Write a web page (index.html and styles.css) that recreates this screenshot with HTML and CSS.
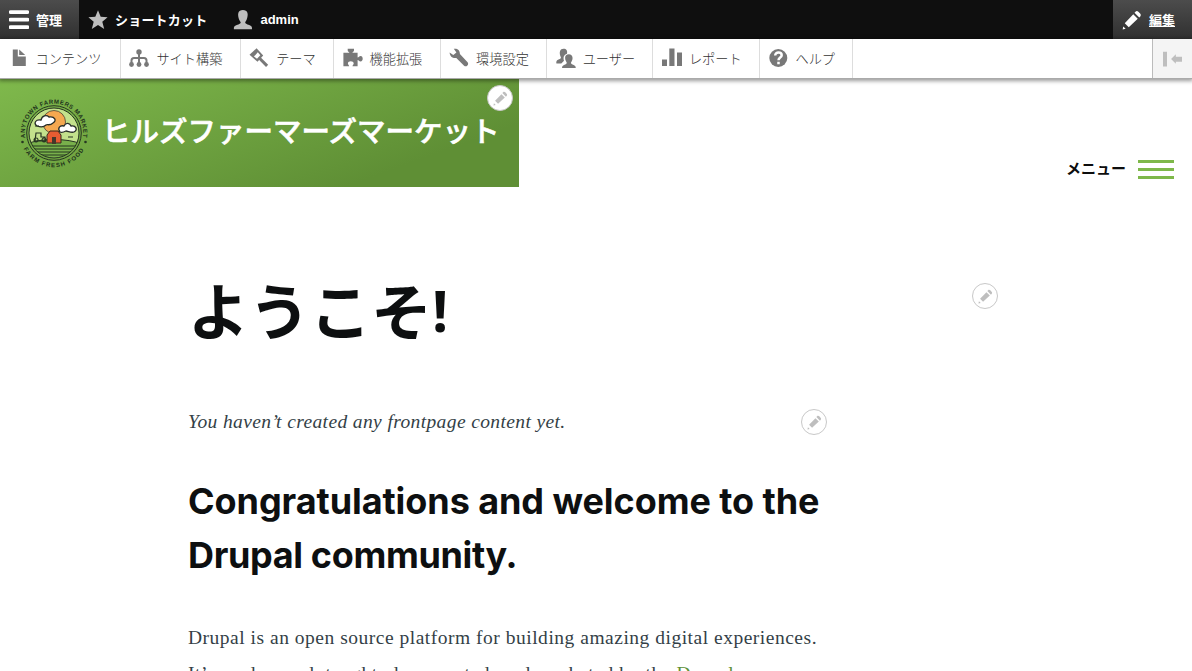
FILE: index.html
```html
<!DOCTYPE html>
<html lang="ja">
<head>
<meta charset="utf-8">
<title>ようこそ! | ヒルズファーマーズマーケット</title>
<link rel="stylesheet" href="styles.css">
</head>
<body>
<svg class="defs" width="0" height="0">
  <symbol id="pencil" viewBox="0 0 16 16"><path d="M14.5 2.800 13.100 1.400c-.7-.7-1.700-.7-2.300-.1l-.8.900L13.800 6l.8-.9c.6-.6.6-1.600-.1-2.300zM2.200 10.500l3.200 3.200 7.200-6.700-3.600-3.600zM.5 15.500l.5-2.400 1.900 1.900z"/></symbol>
</svg>
<nav class="bar">
  <a class="tab tab-active"><svg class="icon-lg" viewBox="0 0 20 20"><path d="M1.500.3h17a1.700 1.700 0 0 1 0 3.600h-17a1.700 1.700 0 0 1 0-3.600zM1.500 7.800h17a1.700 1.700 0 0 1 0 3.800h-17a1.700 1.700 0 0 1 0-3.800zM1.500 15.300h17a1.700 1.700 0 0 1 0 3.800h-17a1.700 1.700 0 0 1 0-3.800z"/></svg>管理</a>
  <a class="tab tab-shortcut"><svg class="icon-lg" viewBox="0 0 20 20"><path d="M10 .2 12.700 6.800 19.600 7.200 14.300 11.700 16.200 19 10 15 3.800 19 5.700 11.700.4 7.200 7.300 6.800z"/></svg>ショートカット</a>
  <a class="tab tab-user"><svg class="icon-lg" viewBox="0 0 20 20"><path d="M.9 19.200c-.3-2.300.5-3.500 2.800-4.300 2.600-.9 4-1.300 4-2.500 0-.8-.8-1.200-1.400-2.500-1.100-2.500-1.500-5.400-.9-7.200C6 1 7.600 0 9.900 0s4 1 4.500 2.800c.6 1.800.2 4.600-.9 7.100-.6 1.300-1.300 1.700-1.300 2.500 0 1.200 1.500 1.600 4 2.500 2.300.8 3.100 2 2.800 4.300z"/></svg>admin</a>
  <a class="tab tab-edit"><svg class="icon-lg"><use href="#pencil"/></svg><span>編集</span></a>
</nav>
<nav class="tray">
  <a class="item item-first"><svg viewBox="0 0 20 20"><path d="M3.800 1.500h5v7h8v9.500h-13zM10.200 1.500l6 5.500h-6z"/></svg>コンテンツ</a>
  <a class="item"><svg viewBox="0 0 20 20"><circle cx="10" cy="4" r="2.700"/><circle cx="2.500" cy="16.500" r="2.400"/><circle cx="10" cy="16.500" r="2.400"/><circle cx="17.500" cy="16.500" r="2.400"/><path class="line" d="M10 5v12M2.500 16.500v-4q0-2.500 2.500-2.500h10q2.500 0 2.500 2.500v4"/></svg>サイト構築</a>
  <a class="item"><svg viewBox="0 0 20 20"><path d="M.5 6.800 7.600.3l6.600 7.200-5.700 6.300z"/><path class="white" d="M8.800 4.300 11.300 7.200 8 10.800 4.800 8.300 6 7.500z"/><path class="handle" d="m10.500 10.300 7.600 7.600"/></svg>テーマ</a>
  <a class="item"><svg viewBox="0 0 20 20"><path d="M.4 4.800h6c0-1-1.700-1.300-1.700-2.300V.7H11v1.800c0 1-1.600 1.300-1.600 2.300h5.200v4.800c1.200 0 1.500-1.500 3-1.500 2.800 0 2.800 5.400 0 5.400-1.500 0-1.800-1.500-3-1.500v6.300H9.500c0-1.300 1.200-1.500 1.200-3 0-2.700-5.800-2.700-5.800 0 0 1.500 1.200 1.700 1.200 3H.4z"/></svg>機能拡張</a>
  <a class="item"><svg viewBox="0 0 20 20"><path d="M4.800.8c3.500-.7 6.300 1.500 6.100 5.200l7.700 8.200c1.700 2-1 5.500-3.500 3.600L7.300 10C3.800 10.600.8 8.500.6 4.500L4.300 7l3.100-2.500z"/></svg>環境設定</a>
  <a class="item"><svg viewBox="0 0 20 20"><path d="M.4 15.400c-.3-2.900.8-3.400 3.500-4.400 1.700-.7 1-1.700.5-2.700C3 4 4 .7 7.500.7c3 0 4.200 2 3.500 5-3.600 1.300-3.900 4-3 7l-2.700 2.700z"/><path d="M6 20.200c.1-2.500 1-3 3.700-4 1.600-.6 1.100-1.600.4-2.600-2.200-4.500-.5-7.300 2.700-7.300s5 2.800 2.800 7.300c-.7 1-1.200 2 .4 2.600 2.700 1 3.700 1.500 3.800 4z"/></svg>ユーザー</a>
  <a class="item"><svg viewBox="0 0 20 20"><path d="M0 11.500h5v6.500H0zM7.300.5h5.200V18H7.300zM15 4.500h5V18h-5z"/></svg>レポート</a>
  <a class="item"><svg viewBox="0 0 20 20"><circle cx="10.300" cy="10" r="9"/><path class="ask" d="M7.200 7.500c0-4 6.500-3.600 6.500-.3 0 2.400-3.200 2.200-3.200 5M10.500 13.800v2.400"/></svg>ヘルプ</a>
  <a class="orient"><svg viewBox="0 0 20 20"><path d="M0 2.300h4.200v15.500H0zM8.500 10l5-5v2.500H20v5.300h-6.500V15z"/></svg></a>
</nav>
<header class="header">
  <div class="brand">
    <svg class="logo" viewBox="0 0 70 70">
      <defs><path id="arc-top" d="M8.200 46.500a29.200 29.200 0 1 1 53.600 0"/><path id="arc-bottom" d="M.8 35a34.200 34.200 0 0 0 68.400 0"/><clipPath id="disc"><circle cx="35" cy="35" r="25"/></clipPath></defs>
      <circle class="ring" cx="35" cy="35" r="27.300"/>
      <g clip-path="url(#disc)">
        <path fill="#c3e18c" d="M9 9h52v52H9z"/>
        <circle cx="35" cy="24" r="11.500" fill="#f5a850" stroke="#333" stroke-width=".7"/>
        <path fill="#78b04b" stroke="#273522" d="M8 46c12-6 42-6 54 0v20H8z"/>
        <path class="rows" d="M9 48h52M9 51h52M9 54h52M9 57h52"/>
      </g>
      <circle class="ring" cx="35" cy="35" r="25"/>
      <path class="cloud" d="M18 28c-4-3-1-7 4-6 1-5 6-5 8-3 6-1 8 4 4 6-3 3-6 1-7 2-2 2-6 2-9 1zM41 34c-3-4 0-7 4-6 2-4 6-3 7 0 5-1 7 4 3 6-3 1-6-1-8-1-2 1-4 2-6 1z"/>
      <path fill="#e65c32" stroke="#352b1e" d="M28 45v-8l3-4h8l3 4v8z"/><path fill="#45382a" d="M33 39h4v7h-4z"/>
      <path class="tractor" d="M17 35h5v4h4v4H16zM17 40a2 2 0 1 0 .1 0M25 40a2 2 0 1 0 .1 0M16 28h4M49 39h5"/>
      <circle cx="3.500" cy="44" r="1.300" fill="#263722"/><circle cx="66.500" cy="44" r="1.300" fill="#263722"/>
      <text class="seal" text-anchor="middle"><textPath href="#arc-top" startOffset="50%">ANYTOWN FARMERS MARKET</textPath></text>
      <text class="seal seal-bottom" text-anchor="middle"><textPath href="#arc-bottom" startOffset="50%">FARM FRESH FOOD</textPath></text>
    </svg>
    <span class="site-name">ヒルズファーマーズマーケット</span>
    <button class="edit edit-brand"><svg><use href="#pencil"/></svg></button>
  </div>
  <a class="menu"><span>メニュー</span><i class="burger"></i></a>
</header>
<main class="main">
  <div class="title-row"><h1>ようこそ<span class="mark">!</span></h1><button class="edit"><svg><use href="#pencil"/></svg></button></div>
  <div class="content">
    <div class="empty-row"><p><em>You haven’t created any frontpage content yet.</em></p><button class="edit"><svg><use href="#pencil"/></svg></button></div>
    <h2><span class="h2-a">Congratulations and welcome to the</span><br><span class="h2-b">Drupal community.</span></h2>
    <p class="copy"><span class="copy-a">Drupal is an open source platform for building amazing digital experiences.</span><br><span class="copy-b">It’s made, used, taught, documented, and marketed by the <a>Drupal</a></span></p>
  </div>
</main>
</body>
</html>
```
FILE: styles.css
```css
* { box-sizing: border-box; }
body { margin: 0; height: 671px; overflow: hidden; background: #fff; font-family: "Liberation Sans", "Noto Sans CJK JP", sans-serif; }
.defs { position: absolute; }
svg { fill: currentColor; flex: none; }
.bar { display: flex; height: 39px; background: #0f0f0f; color: #fff; font-size: 13px; font-weight: 700; }
.tab { display: flex; align-items: center; gap: 7px; padding: 0 17px 0 9px; white-space: nowrap; }
.tab-active, .tab-edit { background: linear-gradient(#4c4c4c, #303030); }
.icon-lg { width: 20px; height: 20px; }
.tab-shortcut svg, .tab-user svg { color: #bebebe; }
.tab-shortcut { padding-right: 18px; letter-spacing: .2px; }
.tab-user { padding-left: 8px; }
.tab-edit { margin-left: auto; text-decoration: underline; }
.tray { position: relative; z-index: 2; display: flex; height: 40px; background: #fff; border-bottom: 1px solid #aaa; box-shadow: 0 1px 4px 1px rgba(0,0,0,.4); font-size: 13.2px; font-weight: 300; color: #333; }
.item { display: flex; align-items: center; gap: 7px; padding: 0 17.3px 1px 8.500px; border-right: 1px solid #ddd; white-space: nowrap; }
.item-first { padding-right: 18.500px; }
.item svg { width: 20px; height: 20px; color: #787878; }
.line { fill: none; stroke: currentColor; stroke-width: 2; }
.handle { stroke: currentColor; stroke-width: 3; }
.white { fill: #fff; }
.ask { fill: none; stroke: #fff; stroke-width: 2.5; }
.orient { display: flex; align-items: center; margin-left: auto; width: 40px; padding-left: 10px; border-left: 1px solid #bbb; background: #f4f4f4; color: #bebebe; }
.orient svg { width: 19px; height: 20px; }
.header { display: flex; justify-content: space-between; height: 108px; }
.brand { position: relative; display: flex; align-items: center; width: 519px; padding-left: 19px; background: linear-gradient(160deg, #7fb94c 0%, #5f8f35 78.660%); color: #fff; }
.logo { width: 70px; height: 70px; overflow: visible; }
.ring { fill: none; stroke: #273522; stroke-width: 1; }
.rows { fill: none; stroke: #24361e; stroke-width: 1; }
.cloud { fill: #fff; stroke: #272d28; stroke-width: 1.300; }
.tractor { fill: none; stroke: #273522; stroke-width: 1.200; }
.seal { fill: #20321b; font-family: "Liberation Sans", sans-serif; font-weight: 700; font-size: 6px; letter-spacing: .55px; }
.seal-bottom { letter-spacing: 1.100px; }
.site-name { margin: -3px 0 0 13px; font-size: 28.5px; font-weight: 500; line-height: 40px; white-space: nowrap; -webkit-text-stroke: .6px currentColor; }
.edit { display: grid; place-items: center; width: 26px; height: 26px; padding: 0; border: 1px solid #c8c8c8; border-radius: 50%; background: #fff; color: #bebebe; }
.edit svg { width: 15px; height: 15px; }
.edit-brand { position: absolute; top: 6px; right: 6px; }
.menu { display: flex; align-items: center; gap: 12px; margin: 70px 18px 0 0; height: 40px; color: #0d0d0d; font-size: 15px; font-weight: 700; }
.menu span { margin-top: -4px; }
.burger { width: 36px; height: 19px; border-top: 3px solid #7eb84a; border-bottom: 3px solid #7eb84a; background: linear-gradient(#7eb84a, #7eb84a) center / 36px 3px no-repeat; }
.main { width: 810px; margin: 0 0 0 188px; padding-top: 84px; }
.title-row { display: flex; justify-content: space-between; height: 84px; padding-top: 12px; }
h1 { margin: -6px 0 0; font-size: 61px; line-height: 72px; color: #0d0f10; }
.mark { position: relative; top: -3px; font-family: "Open Sans", sans-serif; font-size: 57px; }
.content { width: 639px; color: #343f47; font-family: "Liberation Serif", serif; }
.empty-row { display: flex; justify-content: space-between; align-items: flex-start; margin-top: 54px; height: 65px; }
.empty-row p { margin: -5px 0 0; font-size: 19.5px; line-height: 36px; letter-spacing: .38px; white-space: nowrap; }
h2 { margin: 0; color: #0d0f10; font-family: Inter, sans-serif; font-size: 36px; line-height: 54px; white-space: nowrap; }
.h2-a { letter-spacing: -.07px; }
.h2-b { letter-spacing: -.35px; }
.copy { margin: 38px 0 0; font-size: 19.5px; line-height: 36px; letter-spacing: .51px; white-space: nowrap; }
.copy-b { letter-spacing: .6px; }
.copy a { color: #619137; }
```
